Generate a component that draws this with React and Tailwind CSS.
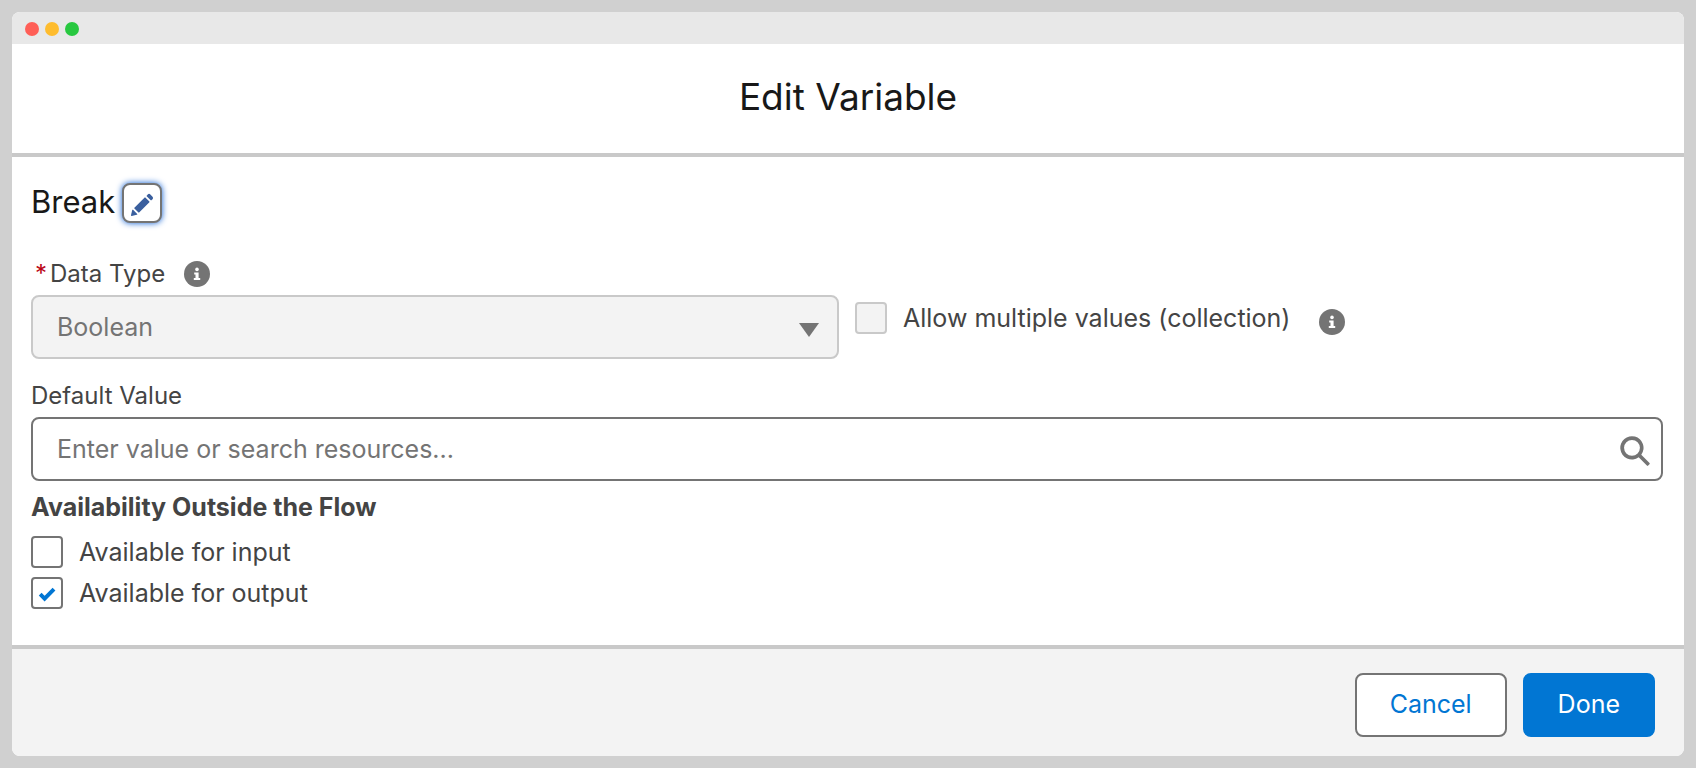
import { useState } from 'react';

const availability = [
  { id: 'input', label: 'Available for input' },
  { id: 'output', label: 'Available for output' },
];

function InfoIcon() {
  return (
    <svg viewBox="0 0 26 26" className="size-[26px] shrink-0" aria-hidden="true">
      <circle cx="13" cy="13" r="13" fill="#747474" />
      <circle cx="13" cy="8.4" r="1.8" fill="#fff" />
      <path d="M10.2 11.4h4.4v5.5h1.6v2h-6.4v-2h1.7v-3.5h-1.3z" fill="#fff" />
    </svg>
  );
}

function EditIcon() {
  return (
    <svg viewBox="0 0 520 520" fill="#3a5f9e" className="size-6" aria-hidden="true">
      <path d="M95 334l89 89c4 4 10 4 14 0l222-223c4-4 4-10 0-14l-88-88a10 10 0 00-14 0L95 321c-4 4-4 10 0 13zM361 57a10 10 0 000 14l88 88c4 4 10 4 14 0l25-25a38 38 0 000-55l-47-47a40 40 0 00-57 0zM21 482c-2 10 7 19 17 17l109-26c4-1 7-3 9-5l2-2c2-2 3-9-1-13l-90-90c-4-4-11-3-13-1l-2 2a20 20 0 00-5 9z" />
    </svg>
  );
}

function SearchIcon() {
  return (
    <svg viewBox="0 0 520 520" fill="#747474" className="absolute right-3 top-[18px] size-8" aria-hidden="true">
      <path d="M496 453L362 320a189 189 0 10-340-92 190 190 0 00298 135l133 133a14 14 0 0021 0l21-21a17 17 0 001-22zM210 338a129 129 0 11130-130 129 129 0 01-130 130z" />
    </svg>
  );
}

function Checkbox({ id, label, checked, disabled, onChange }) {
  return (
    <div className="flex items-center gap-4">
      <span className="relative flex size-8 shrink-0">
        <input
          id={id}
          type="checkbox"
          checked={checked}
          disabled={disabled}
          onChange={onChange}
          className="size-8 appearance-none rounded border-2 border-[#747474] bg-white disabled:border-[#c9c9c9] disabled:bg-[#f3f3f3]"
        />
        {checked && (
          <svg viewBox="0 0 32 32" className="pointer-events-none absolute inset-0 size-8" aria-hidden="true">
            <path d="M9.2 17.2l4.4 4.4 9.4-9.4" fill="none" stroke="#0176d3" strokeWidth="4" />
          </svg>
        )}
      </span>
      <label htmlFor={id} className="text-[25px] leading-8">{label}</label>
    </div>
  );
}

function App() {
  const [value, setValue] = useState('');
  const [checked, setChecked] = useState({ input: false, output: true });

  const toggle = (id) => setChecked(prev => ({ ...prev, [id]: !prev[id] }));

  return (
    <div className="min-h-screen bg-[#d0d0d0] p-3 font-['Inter',sans-serif] text-[#444444]">
      <div className="overflow-hidden rounded-lg bg-white">
        <div className="flex h-8 items-center gap-[6px] bg-[#e8e8e8] px-[13px] pt-[2px]">
          <span className="size-[14px] rounded-full bg-[#ff5f57]" />
          <span className="size-[14px] rounded-full bg-[#febc2e]" />
          <span className="size-[14px] rounded-full bg-[#28c840]" />
        </div>

        <header className="border-b-4 border-[#c9c9c9] pt-[29px] pb-8">
          <h1 className="text-center text-[37px] leading-[48px] text-[#181818]">Edit Variable</h1>
        </header>

        <main className="pt-[26px] pr-[21px] pb-9 pl-[19px]">
          <div className="flex items-center gap-[7px]">
            <h2 className="pb-[2px] text-[31px] leading-[38px] text-[#181818]">Break</h2>
            <button
              type="button"
              aria-label="Edit"
              className="flex size-10 items-center justify-center rounded-lg border-2 border-[#747474] bg-white pt-1 shadow-[0_0_6px_#0b5cd2]"
            >
              <EditIcon />
            </button>
          </div>

          <div className="mt-[38px] flex">
            <div className="w-1/2 pr-2">
              <div className="flex h-[26px] items-center gap-[19px] pl-1">
                <label htmlFor="data-type" className="text-[24px] leading-[26px]">
                  <span className="mr-[3px] text-[#ba0517]">*</span>Data Type
                </label>
                <InfoIcon />
              </div>
              <div className="relative mt-2">
                <select
                  id="data-type"
                  disabled
                  className="block h-16 w-full appearance-none rounded-lg border-2 border-[#c9c9c9] bg-[#f3f3f3] px-6 pt-[2px] text-[25px] text-[#747474] opacity-100"
                >
                  <option>Boolean</option>
                </select>
                <svg viewBox="0 0 20 14" className="pointer-events-none absolute right-5 top-7 h-[14px] w-5" aria-hidden="true">
                  <path d="M0 0h20L10 14z" fill="#747474" />
                </svg>
              </div>
            </div>
            <div className="flex items-start gap-7 pt-[41px] pl-2">
              <Checkbox id="collection" label="Allow multiple values (collection)" checked={false} disabled />
              <div className="pt-[7px]">
                <InfoIcon />
              </div>
            </div>
          </div>

          <label htmlFor="default-value" className="mt-6 block text-[24px] leading-[26px]">Default Value</label>
          <div className="relative mt-2">
            <input
              id="default-value"
              type="text"
              value={value}
              onChange={(e) => setValue(e.target.value)}
              placeholder="Enter value or search resources..."
              className="block h-16 w-full rounded-lg border-2 border-[#747474] bg-white pr-14 pl-6 text-[25px] placeholder:text-[#747474]"
            />
            <SearchIcon />
          </div>

          <fieldset className="mt-[13px]">
            <legend className="text-[25px] leading-[26px] font-bold">Availability Outside the Flow</legend>
            <div className="flex flex-col gap-[9px] pt-4">
              {availability.map((item) => (
                <Checkbox
                  key={item.id}
                  id={item.id}
                  label={item.label}
                  checked={checked[item.id]}
                  onChange={() => toggle(item.id)}
                />
              ))}
            </div>
          </fieldset>
        </main>

        <footer className="flex justify-end gap-4 border-t-4 border-[#c9c9c9] bg-[#f3f3f3] pt-6 pr-[29px] pb-[19px]">
          <button type="button" className="h-16 rounded-lg border-2 border-[#747474] bg-white px-[33px] text-[25px] text-[#0176d3]">
            Cancel
          </button>
          <button type="button" className="h-16 rounded-lg border-2 border-[#0176d3] bg-[#0176d3] px-[33px] text-[25px] text-white">
            Done
          </button>
        </footer>
      </div>
    </div>
  );
}

export default App;
